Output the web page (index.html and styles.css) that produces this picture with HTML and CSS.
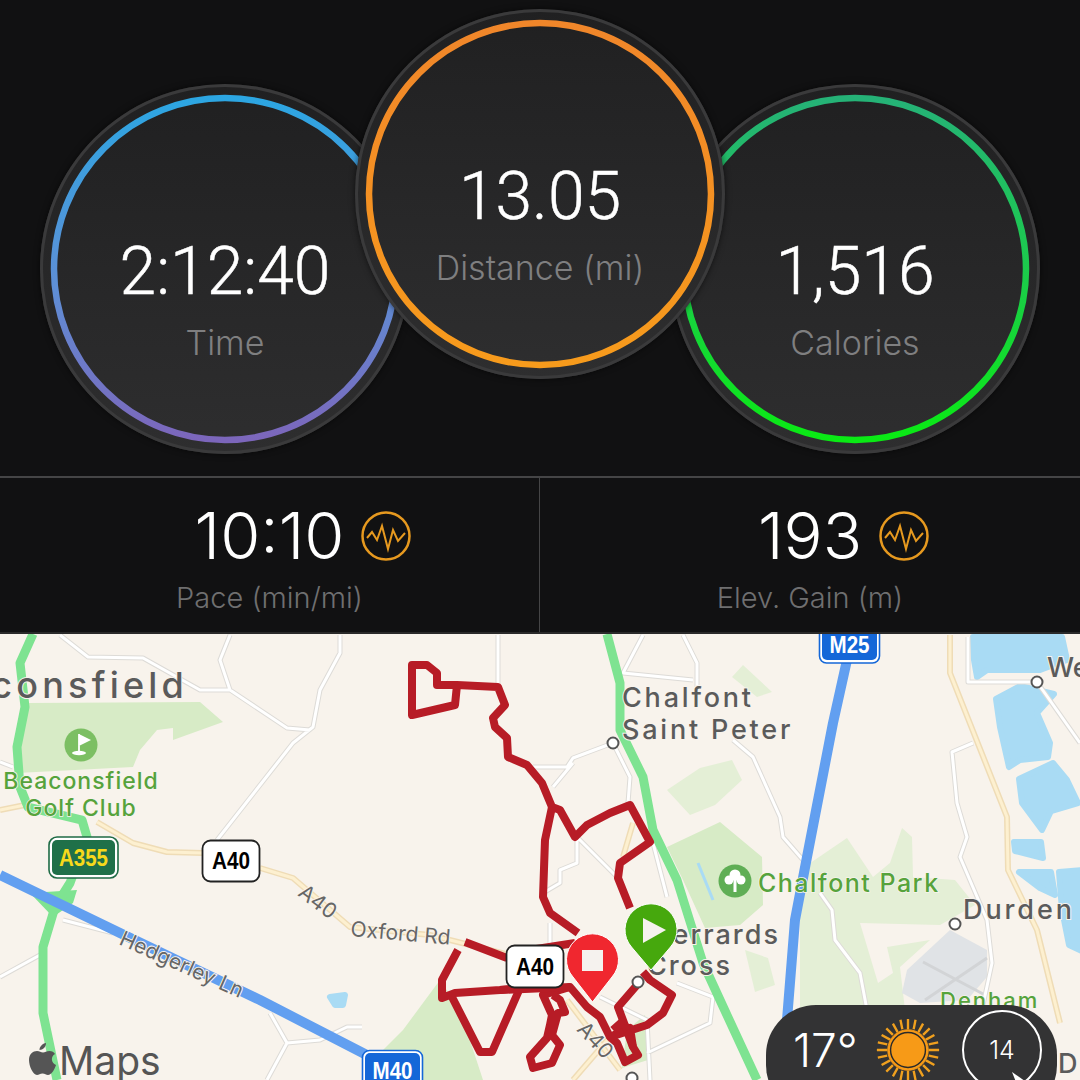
FILE: index.html
```html
<!DOCTYPE html>
<html lang="en">
<head>
    <meta charset="UTF-8">
    <meta name="viewport" content="width=device-width, initial-scale=1.0">
    <title>Run summary</title>
    <link rel="stylesheet" href="styles.css">
</head>
<body>

<section class="dials">
    <div class="dial dial-side">
        <svg class="ring" viewBox="0 0 370 370">
            <defs>
                <linearGradient id="ringBlue" x1="0" y1="0" x2="0" y2="1">
                    <stop offset="0" stop-color="#2ca6e2"/>
                    <stop offset="0.55" stop-color="#5e8fd6"/>
                    <stop offset="1" stop-color="#7c66bb"/>
                </linearGradient>
            </defs>
            <circle cx="185" cy="185" r="171" stroke="url(#ringBlue)"/>
        </svg>
        <div class="dial-value">2:12:40</div>
        <div class="dial-label">Time</div>
    </div>
    <div class="dial dial-main">
        <svg class="ring" viewBox="0 0 370 370">
            <defs>
                <linearGradient id="ringOrange" x1="0" y1="0" x2="0" y2="1">
                    <stop offset="0" stop-color="#f0862a"/>
                    <stop offset="1" stop-color="#f79b1c"/>
                </linearGradient>
            </defs>
            <circle cx="185" cy="185" r="171" stroke="url(#ringOrange)"/>
        </svg>
        <div class="dial-value">13.05</div>
        <div class="dial-label">Distance (mi)</div>
    </div>
    <div class="dial dial-side">
        <svg class="ring" viewBox="0 0 370 370">
            <defs>
                <linearGradient id="ringGreen" x1="0" y1="0" x2="0" y2="1">
                    <stop offset="0" stop-color="#25b277"/>
                    <stop offset="0.5" stop-color="#1ccb4c"/>
                    <stop offset="1" stop-color="#0aea14"/>
                </linearGradient>
            </defs>
            <circle cx="185" cy="185" r="171" stroke="url(#ringGreen)"/>
        </svg>
        <div class="dial-value">1,516</div>
        <div class="dial-label">Calories</div>
    </div>
</section>

<section class="stats">
    <div class="stat">
        <div class="stat-row">
            <span class="stat-value">10:10</span>
            <svg class="pulse" viewBox="0 0 50 50"><circle cx="25" cy="25" r="23.5"/><path d="M6 27 L11 21 L16 29 L21 15 L27 38 L32 19 L37 30 L44 22"/></svg>
        </div>
        <div class="stat-label">Pace (min/mi)</div>
    </div>
    <div class="stat">
        <div class="stat-row">
            <span class="stat-value">193</span>
            <svg class="pulse" viewBox="0 0 50 50"><circle cx="25" cy="25" r="23.5"/><path d="M6 27 L11 21 L16 29 L21 15 L27 38 L32 19 L37 30 L44 22"/></svg>
        </div>
        <div class="stat-label">Elev. Gain (m)</div>
    </div>
</section>

<section class="map">
    <svg class="map-canvas" viewBox="0 634 1080 446">
        <defs>
            <path id="minorRoads" d="M60 635 L88 657 L143 658 L200 690 L230 690 L287 728 L310 730
                M230 635 L220 660 L230 690
                M340 635 L340 653 L320 690 L313 727 L293 743 L217 840
                M0 977 L40 955
                M0 762 L13 767
                M270 1013 L287 1043 L320 1040 L347 1027 L362 1027
                M287 1043 L267 1080
                M63 920 L113 933
                M498 635 L498 683
                M613 743 L573 758 L567 767 L533 767
                M573 763 L553 787
                M613 743 L630 777 L628 803
                M577 837 L617 877
                M577 840 L577 863 L560 870 L560 883 L543 893
                M550 923 L550 943
                M643 635 L623 673 L693 680
                M683 635 L697 663 L697 687
                M653 843 L667 897
                M733 740 L753 757 L780 817 L783 837 L803 860
                M820 893 L832 910 L835 940 L860 973 L867 1010
                M973 743 L952 752 L957 803 L967 837 L960 857 L987 920 L992 963 L983 1005
                M1037 682 L968 682 L968 637
                M1037 682 L1080 743
                M647 1053 L710 1023 L713 997 L677 983
                M600 997 L647 1020 L650 1080"/>
            <path id="yellowRoads" d="M0 810 L25 805
                M97 822 L133 843 L167 852 L203 853
                M260 868 L293 878 L350 927 L430 935 L510 955
                M567 1000 L620 1070
                M573 1080 L610 1037
                M633 823 L623 857
                M950 635 L950 673 L1007 817 L1008 870 L1037 930 L1060 1023"/>
        </defs>

        <rect x="0" y="634" width="1080" height="446" fill="#f8f3ec"/>

        <g class="park-dark">
            <polygon points="28,703 200,702 223,722 173,740 173,728 157,730 140,750 133,767 17,773"/>
            <polygon points="667,847 720,822 762,857 763,905 740,925 705,928 683,880"/>
            <polygon points="440,980 403,1030 378,1055 378,1080 483,1080 460,1010"/>
            <polygon points="627,1030 645,1015 648,1060 622,1068"/>
        </g>
        <g class="park-light">
            <polygon points="667,790 700,768 732,760 742,780 715,805 690,815"/>
            <polygon points="732,677 743,665 772,692 757,697"/>
            <polygon points="800,870 847,838 873,877 890,863 902,828 912,837 913,877 955,880 975,905 940,925 860,923 878,983 893,973 887,947 930,940 900,967 905,1010 800,1010"/>
            <polygon points="745,950 768,958 775,985 755,992"/>
        </g>
        <polygon class="airfield" points="950,930 987,950 987,977 967,1000 920,1003 902,993 907,970"/>
        <path class="airfield-line" d="M923 962 L985 995 M925 1000 L987 958"/>

        <g class="water">
            <polygon points="973,637 1062,637 1067,660 1040,670 987,670 977,677 974,660"/>
            <polygon points="996,699 1020,686 1054,694 1037,713 1050,743 1048,757 1020,760 1009,767 1000,727"/>
            <polygon points="1019,779 1053,763 1067,780 1078,803 1051,811 1042,830 1022,803"/>
            <polygon points="1014,842 1041,842 1043,858 1015,851"/>
            <polygon points="1019,872 1051,872 1055,895 1040,888"/>
            <polygon points="1059,872 1082,870 1082,951 1069,945 1062,910"/>
            <polygon points="330,997 345,995 343,1005 335,1005"/>
            <path class="river" d="M698 863 L713 900"/>
        </g>

        <use href="#minorRoads" class="road-edge"/>
        <use href="#minorRoads" class="road-fill"/>
        <use href="#yellowRoads" class="yellow-edge"/>
        <use href="#yellowRoads" class="yellow-fill"/>

        <polygon class="green-patch" points="30,893 77,890 73,903 53,917"/>
        <path class="green-road" d="M33 634 L20 663 L25 707 L17 747 L20 787 L28 807 L82 820 L87 837 L70 883 L55 907 L43 947 L43 1013 L57 1080"/>
        <path class="green-road" d="M607 634 L620 683 L620 730 L643 777 L653 830 L677 880 L703 963 L720 1000 L757 1080"/>
        <path class="blue-road" d="M0 875 L120 933 L260 1000 L392 1068"/>
        <path class="blue-road" d="M847 660 L833 723 L807 857 L795 920 L787 1020"/>

        <!-- place labels -->
        <text class="town" x="188" y="698" text-anchor="end" font-size="36" letter-spacing="4.2">Beaconsfield</text>
        <text class="park-name" x="81" y="789" text-anchor="middle" font-size="23" letter-spacing="1">Beaconsfield</text>
        <text class="park-name" x="81" y="816" text-anchor="middle" font-size="23" letter-spacing="1">Golf Club</text>
        <text class="town" x="622" y="707" font-size="27" letter-spacing="2.8">Chalfont</text>
        <text class="town" x="622" y="739" font-size="27" letter-spacing="2.8">Saint Peter</text>
        <text class="park-name" x="758" y="892" font-size="25" letter-spacing="1.5">Chalfont Park</text>
        <text class="town" x="963" y="919" font-size="27" letter-spacing="2.9">Durden</text>
        <text class="town" x="1047" y="677" font-size="27">We</text>
        <text class="town" x="780" y="944" text-anchor="end" font-size="27" letter-spacing="2">Gerrards</text>
        <text class="town" x="732" y="975" text-anchor="end" font-size="27" letter-spacing="2">Cross</text>
        <text class="park-name" x="940" y="1008" font-size="22" letter-spacing="2">Denham</text>
        <text class="town" x="1058" y="1073" font-size="27">D</text>

        <text class="road-name" transform="translate(350 936) rotate(5)" font-size="21">Oxford Rd</text>
        <text class="road-name" transform="translate(297 895) rotate(37)" font-size="21">A40</text>
        <text class="road-name" transform="translate(576 1030) rotate(47)" font-size="21">A40</text>
        <text class="road-name" transform="translate(118 944) rotate(24)" font-size="21">Hedgerley Ln</text>

        <!-- route -->
        <path class="route" d="M630 908 L618 878 L620 863 L650 842 L630 805 L610 813 L587 825 L575 837 L560 810 L552 807 L542 783 L527 765 L508 757 L507 738 L495 727 L493 718 L505 705 L498 687 L457 685 L455 705 L412 715 L412 665 L427 665 L437 673 L437 685 L457 685"/>
        <path class="route" d="M552 807 L545 840 L543 897 L550 913 L578 933"/>
        <path class="route" d="M465 942 L507 958 M530 950 L575 943"/>
        <path class="route" d="M458 950 L442 980 L442 998 L455 993 L500 990 L520 988 L492 1052 L480 1052 L452 997"/>
        <path class="route" d="M570 987 L543 995 L552 1015 L550 1025 L547 1038 L530 1057 L533 1068 L552 1063 L560 1045 L552 1035 L558 1013 L565 1012 L560 1000 L553 995"/>
        <path class="route" d="M500 990 L570 987 L587 1007 L600 1017 L610 1037 L630 1028 L633 1047 L638 1055 L625 1062 L617 1043 L610 1037 L647 1025 L663 1013 L672 995 L650 980 L643 972"/>
        <path class="route" d="M637 985 L618 1007 L633 1047"/>
        <path class="route" d="M613 1030 L622 1022 L628 1030"/>

        <!-- nodes -->
        <circle class="node" cx="613" cy="743" r="5.5"/>
        <circle class="node" cx="1037" cy="682" r="5.5"/>
        <circle class="node" cx="955" cy="924" r="5.5"/>
        <circle class="node" cx="638" cy="982" r="5.5"/>
        <circle class="node" cx="632" cy="1078" r="5.5"/>

        <!-- golf and tree icons -->
        <circle cx="81" cy="745" r="16.5" fill="#7cbf63"/>
        <path d="M79 734 V752 M79 735 L89 740 L79 745" fill="#fff" stroke="#fff" stroke-width="1.8"/>
        <ellipse cx="79" cy="753" rx="7" ry="2.2" fill="#fff"/>
        <circle cx="735" cy="881" r="16.5" fill="#5fae55"/>
        <g fill="#fff">
            <circle cx="735" cy="875" r="5.5"/>
            <circle cx="729" cy="880" r="4.5"/>
            <circle cx="741" cy="880" r="4.5"/>
            <rect x="733.500" y="880" width="3" height="12"/>
        </g>
        <circle cx="915" cy="1020" r="15" fill="#5fae55"/>

        <!-- shields -->
        <rect x="49" y="837" width="69" height="41" rx="8" fill="#fff" stroke="#1f6b45" stroke-width="1.6"/>
        <rect x="52" y="840" width="63" height="35" rx="5" fill="#1f7049"/>
        <text class="shield" x="83.500" y="866" fill="#f7d91b" font-size="24" textLength="49" lengthAdjust="spacingAndGlyphs">A355</text>
        <rect x="202.500" y="840.500" width="57" height="41" rx="8" fill="#fff" stroke="#222" stroke-width="1.8"/>
        <text class="shield" x="231" y="869" fill="#000" font-size="24" textLength="38" lengthAdjust="spacingAndGlyphs">A40</text>
        <rect x="506.500" y="945.500" width="57" height="42" rx="8" fill="#fff" stroke="#222" stroke-width="1.8"/>
        <text class="shield" x="535" y="975" fill="#000" font-size="24" textLength="38" lengthAdjust="spacingAndGlyphs">A40</text>
        <rect x="819.500" y="620" width="60" height="43" rx="7" fill="#fff" stroke="#1467d8" stroke-width="1.6"/>
        <rect x="822" y="620" width="55" height="40" rx="5" fill="#1467d8"/>
        <text class="shield" x="849.500" y="653" fill="#fff" font-size="24" textLength="40" lengthAdjust="spacingAndGlyphs">M25</text>
        <rect x="362.500" y="1050.500" width="60" height="43" rx="7" fill="#fff" stroke="#1467d8" stroke-width="1.6"/>
        <rect x="365" y="1053" width="55" height="40" rx="5" fill="#1467d8"/>
        <text class="shield" x="392.500" y="1079" fill="#fff" font-size="24" textLength="40" lengthAdjust="spacingAndGlyphs">M40</text>

        <!-- pins -->
        <path class="pin" fill="#f0272f" d="M592.500 1002 L573 977 A26 26 0 1 1 612 977 Z"/>
        <rect x="582" y="950" width="21" height="21" fill="#f5f2ee"/>
        <path class="pin" fill="#46a80d" d="M651 970 L631.500 947 A26 26 0 1 1 670.500 947 Z"/>
        <polygon points="643,918 666,930 643,943" fill="#f5f2ee"/>

        <!-- maps logo -->
        <path class="apple" d="M46 1043 C46 1047 43 1050 39.500 1050 C39.500 1046.500 42.500 1043.500 46 1043 Z M29 1060 C29 1054 33 1051 37 1051 C39.500 1051 41 1052.500 43 1052.500 C45 1052.500 46.500 1051 49.500 1051 C52 1051 54 1052 55 1054 C50.500 1056.500 51 1063 56 1065 C54.500 1069.500 51.500 1075 48 1075 C46 1075 45 1073.500 42.500 1073.500 C40 1073.500 39 1075 37 1075 C33 1075 29 1066 29 1060 Z"/>
        <text class="maps-word" x="59" y="1075" font-size="39">Maps</text>
    </svg>

    <div class="weather">
        <span class="temp">17°</span>
        <svg class="sun" viewBox="0 0 70 70">
            <g class="sun-rays">
                <path d="M35 2 V13 M35 57 V68 M2 35 H13 M57 35 H68"/>
                <path d="M19 7 L24 16 M46 54 L51 63 M7 19 L16 24 M54 46 L63 51"/>
                <path d="M51 7 L46 16 M24 54 L19 63 M63 19 L54 24 M16 46 L7 51"/>
                <path d="M27 3 L29 13 M41 57 L43 67 M3 27 L13 29 M57 41 L67 43"/>
                <path d="M43 3 L41 13 M29 57 L27 67 M67 27 L57 29 M13 41 L3 43"/>
                <path d="M12 12 L19 19 M51 51 L58 58 M58 12 L51 19 M19 51 L12 58"/>
            </g>
            <circle cx="35" cy="35" r="21.500" fill="#f79a17" stroke="#f79a17" stroke-width="1"/>
            <circle cx="35" cy="35" r="18.500" fill="#f79a17" stroke="#2a2a2a" stroke-width="1.500"/>
        </svg>
        <div class="wind">
            <span>14</span>
            <svg class="wind-arrow" viewBox="0 0 24 24"><polygon points="2,2 22,16 10,22"/></svg>
        </div>
    </div>
</section>

</body>
</html>
```

FILE: styles.css
```css
html, body {
    margin: 0;
    padding: 0;
    height: 1080px;
    overflow: hidden;
}
body {
    background-color: #111112;
    font-family: Inter, "Liberation Sans", sans-serif;
    display: flex;
    flex-direction: column;
}

/* three dials */
.dials {
    height: 476px;
    box-sizing: border-box;
    padding: 9px 0 0 40px;
    display: flex;
    align-items: flex-start;
}
.dial {
    position: relative;
    flex: none;
    width: 370px;
    height: 370px;
    box-sizing: border-box;
    padding-top: 150px;
    border-radius: 50%;
    background: linear-gradient(#202021, #2e2e2f);
    box-shadow: inset 0 0 0 3px #3a3a3b, 0 0 6px rgba(0, 0, 0, 0.6);
    display: flex;
    flex-direction: column;
    align-items: center;
}
.dial-side {
    margin-top: 75px;
}
.dial-side + .dial-main {
    margin-left: -55px;
    z-index: 1;
}
.dial-main + .dial-side {
    margin-left: -55px;
}
.ring {
    position: absolute;
    left: 0;
    top: 0;
    width: 370px;
    height: 370px;
}
.ring circle {
    fill: none;
    stroke-width: 6.5;
}
.dial-value {
    color: #fff;
    font-family: Roboto, Inter, sans-serif;
    font-size: 66px;
    font-weight: 300;
    line-height: 76px;
    -webkit-text-stroke: 0.5px #fff;
}
.dial-label {
    color: #7f7f80;
    font-size: 34px;
    font-weight: 300;
    line-height: 40px;
    margin-top: 13px;
}

/* pace and elevation */
.stats {
    height: 158px;
    box-sizing: border-box;
    border-top: 2px solid #454546;
    border-bottom: 2px solid #2a2a2a;
    display: flex;
}
.stat {
    flex: 1;
    box-sizing: border-box;
    padding-top: 20px;
    display: flex;
    flex-direction: column;
    align-items: center;
}
.stat:first-child {
    flex: 0 0 539px;
}
.stat + .stat {
    border-left: 1px solid #454546;
}
.stat-row {
    display: flex;
    align-items: center;
    gap: 17px;
    height: 76px;
}
.stat-value {
    color: #fff;
    font-size: 65px;
    font-weight: 300;
    line-height: 76px;
}
.pulse {
    width: 50px;
    height: 50px;
    margin-right: -67px;
    fill: none;
    stroke: #e6991f;
}
.pulse circle {
    stroke-width: 2.5;
}
.pulse path {
    stroke-width: 2;
}
.stat-label {
    color: #6f6f70;
    font-size: 29px;
    font-weight: 300;
    line-height: 36px;
    margin-top: 6px;
}

/* map */
.map {
    position: relative;
    flex: 1;
    overflow: hidden;
}
.map-canvas {
    display: block;
    width: 1080px;
    height: 446px;
}
.park-dark polygon {
    fill: #d7ebc6;
}
.park-light polygon {
    fill: #e4efd6;
}
.airfield {
    fill: #e0e3e6;
}
.airfield-line {
    fill: none;
    stroke: #d2d4d6;
    stroke-width: 3;
}
.water polygon {
    fill: #a9dbf4;
    stroke: #a9dbf4;
    stroke-width: 6;
    stroke-linejoin: round;
}
.river {
    fill: none;
    stroke: #a9dbf4;
    stroke-width: 3;
}
.road-edge, .road-fill, .yellow-edge, .yellow-fill {
    fill: none;
    stroke-linejoin: round;
}
.road-edge {
    stroke: #dddbd7;
    stroke-width: 5;
}
.road-fill {
    stroke: #fff;
    stroke-width: 3;
}
.yellow-edge {
    stroke: #efdcb6;
    stroke-width: 6;
}
.yellow-fill {
    stroke: #fdf0d0;
    stroke-width: 3;
}
.green-patch {
    fill: #7ee391;
}
.green-road {
    fill: none;
    stroke: #7ee391;
    stroke-width: 9;
    stroke-linejoin: round;
}
.blue-road {
    fill: none;
    stroke: #629ff0;
    stroke-width: 10;
    stroke-linejoin: round;
}
.map-canvas text {
    font-family: Inter, "Liberation Sans", sans-serif;
}
.town {
    fill: #5b5b5b;
    font-weight: 500;
    stroke: #f8f3ec;
    stroke-width: 2;
    paint-order: stroke;
}
.park-name {
    fill: #56a33c;
    font-weight: 500;
    stroke: #f8f3ec;
    stroke-width: 1.5;
    paint-order: stroke;
}
.road-name {
    fill: #666;
    stroke: #f8f3ec;
    stroke-width: 2;
    paint-order: stroke;
}
.route {
    fill: none;
    stroke: #b71c26;
    stroke-width: 8;
    stroke-linejoin: round;
}
.node {
    fill: #fff;
    stroke: #555;
    stroke-width: 2;
}
.map-canvas .shield {
    font-family: "Liberation Sans", Arial, sans-serif;
    font-weight: 700;
    text-anchor: middle;
}
.pin {
    stroke: #fff;
    stroke-width: 1;
}
.apple {
    fill: #555;
}
.maps-word {
    fill: #555;
}

/* weather pill over the map */
.weather {
    position: absolute;
    left: 766px;
    top: 371px;
    width: 291px;
    height: 110px;
    box-sizing: border-box;
    padding: 0 0 0 27px;
    border-radius: 50px;
    background-color: #333334;
    display: flex;
    align-items: flex-start;
}
.temp {
    color: #fff;
    font-size: 46px;
    font-weight: 300;
    line-height: 56px;
    margin-top: 17px;
    width: 82px;
}
.sun {
    width: 66px;
    height: 66px;
    margin-top: 12px;
}
.sun-rays path {
    fill: none;
    stroke: #f0a01e;
    stroke-width: 2.5;
}
.wind {
    position: relative;
    width: 80px;
    height: 80px;
    margin: 5px 0 0 21px;
    box-sizing: border-box;
    border: 2.5px solid #fff;
    border-radius: 50%;
    color: #fff;
    font-size: 25px;
    font-weight: 300;
    display: flex;
    align-items: center;
    justify-content: center;
}
.wind-arrow {
    position: absolute;
    left: 46px;
    top: 58px;
    width: 24px;
    height: 24px;
    fill: #fff;
}
```
